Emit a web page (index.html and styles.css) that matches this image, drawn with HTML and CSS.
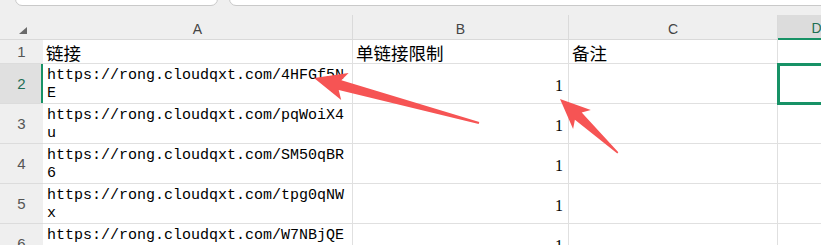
FILE: index.html
```html
<!DOCTYPE html>
<html lang="zh-CN">
<head>
<meta charset="utf-8">
<title>Sheet</title>
<link rel="stylesheet" href="styles.css">
</head>
<body>
<div class="top">
  <div class="box box1"></div>
  <div class="box box2"></div>
</div>
<div class="sheet">
  <div class="corner"><span class="tri"></span></div>
  <div class="ch">A</div>
  <div class="ch">B</div>
  <div class="ch">C</div>
  <div class="ch ch-sel">D</div>
  <div class="ch ch-last"></div>

  <div class="rh">1</div>
  <div class="cell title">链接</div>
  <div class="cell title">单链接限制</div>
  <div class="cell title">备注</div>
  <div class="cell"></div>
  <div class="cell"></div>

  <div class="rh rh-sel">2</div>
  <div class="cell url">https://rong.cloudqxt.com/4HFGf5NE</div>
  <div class="cell num">1</div>
  <div class="cell"></div>
  <div class="cell sel"></div>
  <div class="cell"></div>

  <div class="rh">3</div>
  <div class="cell url">https://rong.cloudqxt.com/pqWoiX4u</div>
  <div class="cell num">1</div>
  <div class="cell"></div>
  <div class="cell"></div>
  <div class="cell"></div>

  <div class="rh">4</div>
  <div class="cell url">https://rong.cloudqxt.com/SM50qBR6</div>
  <div class="cell num">1</div>
  <div class="cell"></div>
  <div class="cell"></div>
  <div class="cell"></div>

  <div class="rh">5</div>
  <div class="cell url">https://rong.cloudqxt.com/tpg0qNWx</div>
  <div class="cell num">1</div>
  <div class="cell"></div>
  <div class="cell"></div>
  <div class="cell"></div>

  <div class="rh">6</div>
  <div class="cell url">https://rong.cloudqxt.com/W7NBjQEc</div>
  <div class="cell num">1</div>
  <div class="cell"></div>
  <div class="cell"></div>
  <div class="cell"></div>
</div>
<svg class="arrows" width="821" height="245" viewBox="0 0 821 245">
  <polygon points="314,78 348.6,72.9 341.4,80.3 479.3,122 478.7,124 338.7,89.9 341.2,99.9"/>
  <polygon points="560,99 590.8,109.9 581.7,112.4 618.3,152.3 617.3,153.5 574.9,119.7 573.1,129"/>
</svg>
</body>
</html>
```
FILE: styles.css
```css
html, body {
  margin: 0;
  padding: 0;
}
body {
  width: 821px;
  height: 245px;
  overflow: hidden;
  position: relative;
  background: #ffffff;
  font-family: "Liberation Sans", "Noto Sans CJK SC", sans-serif;
}
.top {
  height: 15px;
  background: #efefef;
  display: flex;
  gap: 11px;
  padding-left: 15px;
  box-sizing: border-box;
}
.box {
  height: 16px;
  margin-top: -10px;
  background: #ffffff;
  border: 1px solid #c9c9c9;
  border-radius: 0 0 7px 7px;
  box-sizing: border-box;
}
.box1 {
  width: 203px;
}
.box2 {
  flex: 1;
  margin-right: -20px;
}
.sheet {
  display: grid;
  width: max-content;
  grid-template-columns: 43px 310px 216px 209px 78px 100px;
  grid-template-rows: 25px 24px repeat(5, 40px);
}
.corner {
  background: #efefef;
  border-bottom: 1px solid #d9d9d9;
  position: relative;
}
.tri {
  position: absolute;
  left: 19px;
  top: 12px;
  width: 0;
  height: 0;
  border-left: 8px solid transparent;
  border-bottom: 7px solid #6a6a6a;
}
.ch {
  background: #efefef;
  border-right: 1px solid #dadada;
  border-bottom: 1px solid #d9d9d9;
  box-sizing: border-box;
  display: flex;
  align-items: center;
  justify-content: center;
  padding-top: 3px;
  font-size: 14px;
  color: #444444;
}
.ch-sel {
  background: #dcdcdc;
  border-bottom: 2px solid #179266;
  color: #1d6f52;
}
.rh {
  background: #efefef;
  border-bottom: 1px solid #dcdcdc;
  box-sizing: border-box;
  display: flex;
  align-items: center;
  justify-content: center;
  font-size: 15px;
  color: #555555;
}
.rh-sel {
  background: #e0e0e0;
  color: #1f6e55;
  box-shadow: inset -2px 0 0 #179266;
}
.cell {
  background: #ffffff;
  border-right: 1px solid #e0e0e0;
  border-bottom: 1px solid #e0e0e0;
  box-sizing: border-box;
  overflow: hidden;
  color: #000000;
}
.title {
  font-family: "Noto Sans CJK SC", sans-serif;
  font-size: 17.5px;
  line-height: 23px;
  padding: 1px 0 0 3px;
  white-space: nowrap;
}
.url {
  font-family: "Liberation Mono", monospace;
  font-size: 15px;
  line-height: 18px;
  padding: 3px 4px 0 4px;
  word-break: break-all;
}
.num {
  display: flex;
  align-items: flex-end;
  justify-content: flex-end;
  padding: 0 5px 7px 0;
  font-family: "Liberation Serif", serif;
  font-size: 16px;
  line-height: 20px;
}
.sel {
  position: relative;
  overflow: visible;
}
.sel::after {
  content: "";
  position: absolute;
  left: -1px;
  top: -1px;
  bottom: -2px;
  right: -40px;
  border: 3px solid #179266;
}
.arrows {
  position: absolute;
  left: 0;
  top: 0;
  pointer-events: none;
}
.arrows polygon {
  fill: #f65454;
}
```
